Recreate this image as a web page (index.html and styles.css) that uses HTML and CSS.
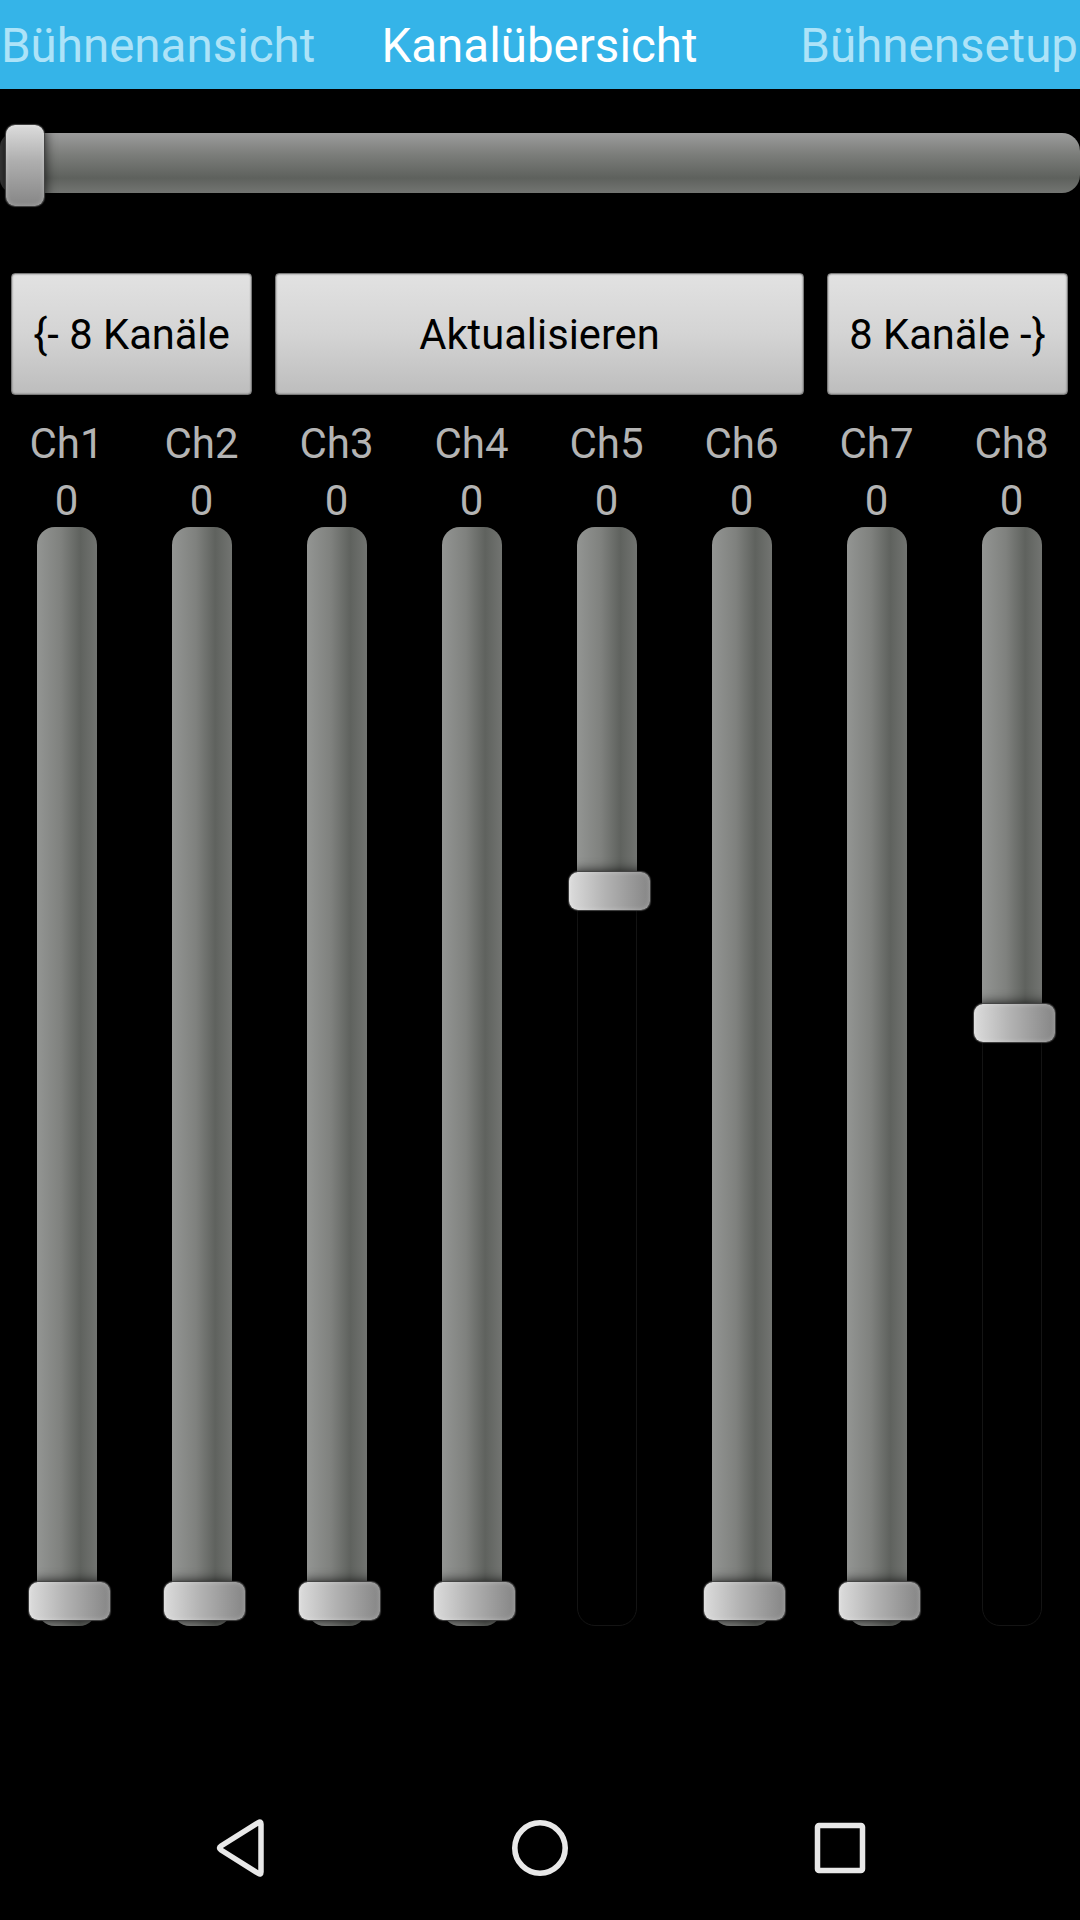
FILE: index.html
```html
<!DOCTYPE html>
<html lang="de">
<head>
    <meta charset="UTF-8">
    <title>Kanalübersicht</title>
    <link rel="stylesheet" href="styles.css">
</head>
<body>

    <header class="tabs">
        <span class="tab tab-left">Bühnenansicht</span>
        <span class="tab tab-active">Kanalübersicht</span>
        <span class="tab tab-right">Bühnensetup</span>
    </header>

    <div class="master">
        <div class="master-thumb"></div>
    </div>

    <div class="buttons">
        <button class="btn">{- 8 Kanäle</button>
        <button class="btn">Aktualisieren</button>
        <button class="btn">8 Kanäle -}</button>
    </div>

    <section class="channels">
        <div class="channel">
            <div class="ch-name">Ch1</div>
            <div class="ch-value">0</div>
            <div class="fader"><div class="fill fill-full"></div><div class="thumb" style="top: 1054px"></div></div>
        </div>
        <div class="channel">
            <div class="ch-name">Ch2</div>
            <div class="ch-value">0</div>
            <div class="fader"><div class="fill fill-full"></div><div class="thumb" style="top: 1054px"></div></div>
        </div>
        <div class="channel">
            <div class="ch-name">Ch3</div>
            <div class="ch-value">0</div>
            <div class="fader"><div class="fill fill-full"></div><div class="thumb" style="top: 1054px"></div></div>
        </div>
        <div class="channel">
            <div class="ch-name">Ch4</div>
            <div class="ch-value">0</div>
            <div class="fader"><div class="fill fill-full"></div><div class="thumb" style="top: 1054px"></div></div>
        </div>
        <div class="channel">
            <div class="ch-name">Ch5</div>
            <div class="ch-value">0</div>
            <div class="fader"><div class="fill" style="height: 354px"></div><div class="thumb" style="top: 344px"></div></div>
        </div>
        <div class="channel">
            <div class="ch-name">Ch6</div>
            <div class="ch-value">0</div>
            <div class="fader"><div class="fill fill-full"></div><div class="thumb" style="top: 1054px"></div></div>
        </div>
        <div class="channel">
            <div class="ch-name">Ch7</div>
            <div class="ch-value">0</div>
            <div class="fader"><div class="fill fill-full"></div><div class="thumb" style="top: 1054px"></div></div>
        </div>
        <div class="channel">
            <div class="ch-name">Ch8</div>
            <div class="ch-value">0</div>
            <div class="fader"><div class="fill" style="height: 486px"></div><div class="thumb" style="top: 476px"></div></div>
        </div>
    </section>

    <nav class="navbar">
        <svg class="nav-icon" viewBox="0 0 60 60">
            <path d="M51 6 V54 Q51 57 48.5 55.5 L11 32 Q8 30 11 28 L48.5 4.5 Q51 3 51 6 Z" fill="none" stroke="#e8e8e8" stroke-width="5.5" stroke-linejoin="round"/>
        </svg>
        <svg class="nav-icon" viewBox="0 0 60 60">
            <circle cx="30" cy="30" r="25.2" fill="none" stroke="#e8e8e8" stroke-width="5.6"/>
        </svg>
        <svg class="nav-icon" viewBox="0 0 60 60">
            <rect x="7.5" y="7.5" width="45" height="45" rx="1.5" fill="none" stroke="#e8e8e8" stroke-width="5.5"/>
        </svg>
    </nav>

</body>
</html>
```

FILE: styles.css
```css
* {
    box-sizing: border-box;
}
body {
    margin: 0;
    width: 1080px;
    height: 1920px;
    background: #000;
    font-family: Roboto, sans-serif;
    display: flex;
    flex-direction: column;
    overflow: hidden;
}

.tabs {
    height: 89px;
    background: #35b4e8;
    display: grid;
    grid-template-columns: 1fr auto 1fr;
    align-items: center;
    padding: 4px 2px 0 1px;
    font-size: 47.5px;
    line-height: 85px;
    white-space: nowrap;
}
.tab {
    color: #ade3f8;
}
.tab-active {
    color: #fff;
}
.tab-right {
    justify-self: end;
}

.master {
    position: relative;
    height: 60px;
    margin-top: 44px;
    border-radius: 18px;
    background: linear-gradient(to bottom, #9c9c9c 0%, #7c7e7b 35%, #5e615d 75%, #737572 100%);
}
.master::before {
    content: "";
    position: absolute;
    left: 0;
    top: 0;
    bottom: 0;
    width: 14px;
    border-radius: 18px 0 0 18px;
    background: #3c3c3c;
}
.master-thumb {
    position: absolute;
    left: 6px;
    top: -8px;
    width: 38px;
    height: 81px;
    border-radius: 9px;
    background: linear-gradient(to bottom, #dcdcdc 0%, #aeaeae 45%, #868686 100%);
    box-shadow: inset 0 0 5px rgba(255, 255, 255, 0.3), 0 0 1px 1px #444, 0 0 12px 1px rgba(0, 0, 0, 0.8);
    filter: blur(0.6px);
}

.buttons {
    display: grid;
    grid-template-columns: 241px 1fr 241px;
    gap: 23px;
    margin-top: 80px;
    padding: 0 12px 0 11px;
}
.btn {
    height: 122px;
    padding: 0;
    border: 1px solid #7a7a7a;
    border-radius: 4px;
    background: linear-gradient(to bottom, #e2e2e2 0%, #d4d4d4 50%, #bdbdbd 100%);
    box-shadow: inset 0 0 2px #666;
    color: #000;
    font-family: Roboto, sans-serif;
    font-size: 41.7px;
}

.channels {
    display: grid;
    grid-template-columns: repeat(8, 135px);
    margin-left: -1px;
}
.channel {
    display: flex;
    flex-direction: column;
    align-items: center;
    color: #b4b4b4;
    font-size: 42px;
    text-align: center;
}
.ch-name {
    height: 57px;
    line-height: 57px;
    margin-top: 20px;
}
.ch-value {
    height: 55px;
    line-height: 57px;
}
.fader {
    position: relative;
    width: 60px;
    height: 1099px;
    border: 1px solid #141414;
    border-radius: 18px;
}
.fill {
    margin: -1px;
    border-radius: 18px 18px 0 0;
    background: linear-gradient(to right, #939593 0%, #7f817e 40%, #5f625e 72%, #727471 100%);
}
.fill-full {
    height: 1099px;
    border-radius: 18px;
}
.thumb {
    position: absolute;
    left: -9px;
    width: 81px;
    height: 38px;
    border-radius: 9px;
    background: linear-gradient(to right, #dcdcdc 0%, #b2b2b2 45%, #868686 100%);
    box-shadow: inset 0 0 5px rgba(255, 255, 255, 0.3), 0 0 1px 1px #444, 0 0 12px 1px rgba(0, 0, 0, 0.8);
    filter: blur(0.6px);
}

.navbar {
    margin-top: auto;
    height: 144px;
    display: flex;
    justify-content: center;
    align-items: center;
    gap: 240px;
}
.nav-icon {
    width: 60px;
    height: 60px;
}
```
